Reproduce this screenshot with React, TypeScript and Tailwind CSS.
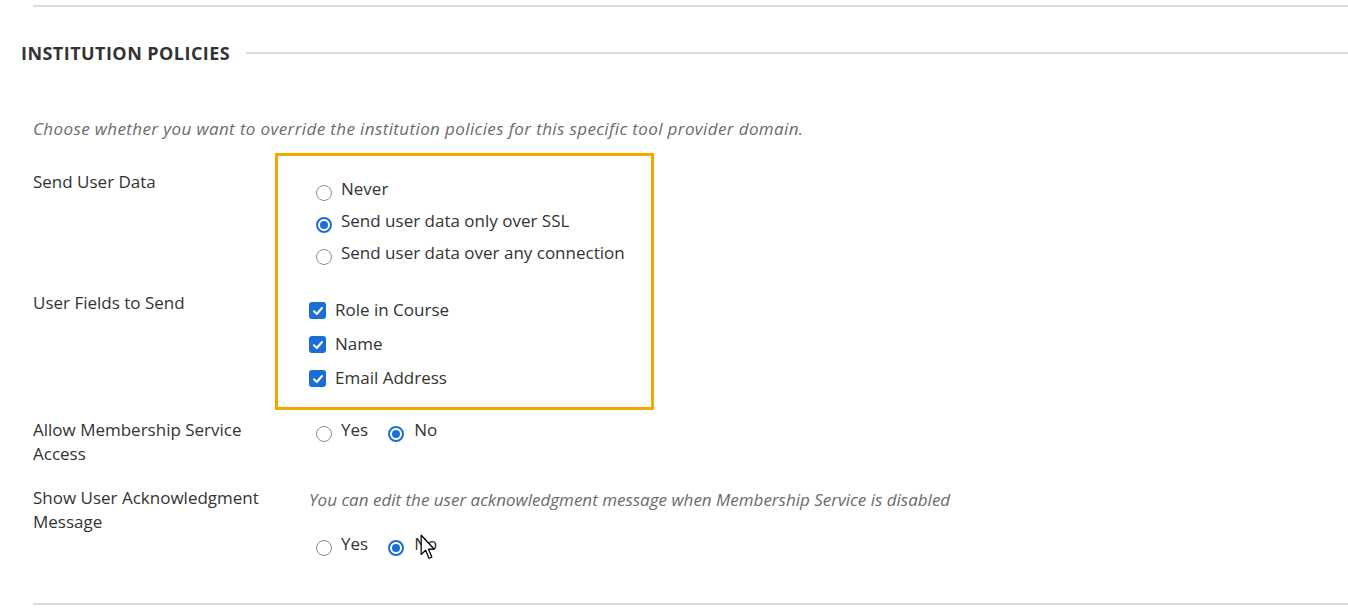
import React from 'react';

const Radio: React.FC<{ checked?: boolean }> = ({ checked }) => (
  <span
    className={
      'mt-[8px] flex h-[16px] w-[16px] shrink-0 items-center justify-center rounded-full bg-white ' +
      (checked ? 'border-2 border-[#1a6fd6]' : 'border-[1.5px] border-[#8c8c8c]')
    }
  >
    {checked && <span className="h-[8px] w-[8px] rounded-full bg-[#1a6fd6]" />}
  </span>
);

const Checkbox: React.FC = () => (
  <span className="mt-[4px] flex h-[17px] w-[17px] shrink-0 items-center justify-center rounded-[3px] bg-[#1a6fd6]">
    <svg width="12" height="12" viewBox="0 0 12 12" fill="none">
      <path d="M2 6.3 L4.8 9 L10 3" stroke="white" strokeWidth="2" strokeLinecap="round" strokeLinejoin="round" />
    </svg>
  </span>
);

const RadioOption: React.FC<{ label: string; checked?: boolean }> = ({ label, checked }) => (
  <div className="flex h-[24px] items-start gap-[9px]">
    <Radio checked={checked} />
    <span className="leading-[24px]">{label}</span>
  </div>
);

const YesNo: React.FC = () => (
  <div className="flex h-[24px] items-start pl-[7px]">
    <Radio />
    <span className="ml-[9px] leading-[24px]">Yes</span>
    <span className="ml-[20px] flex">
      <Radio checked />
    </span>
    <span className="ml-[10px] leading-[24px]">No</span>
  </div>
);

const Cursor: React.FC = () => (
  <svg className="absolute left-[419px] top-[534px]" width="18" height="26" viewBox="0 0 13 21">
    <path
      d="M1 1 L1 16.5 L4.6 13.1 L7.3 19.6 L9.6 18.6 L6.9 12.3 L11.6 12.3 Z"
      fill="white"
      stroke="black"
      strokeWidth="1"
      strokeLinejoin="round"
    />
  </svg>
);

export default function App() {
  return (
    <div
      className="relative h-[610px] w-[1348px] overflow-hidden bg-white text-[17px] text-[#333]"
      style={{ fontFamily: '"Open Sans", "Liberation Sans", sans-serif' }}
    >
      <div className="ml-[33px] mt-[5px] h-[2px] bg-[#dcdcdc]" />

      <div className="mt-[35px] flex items-center pl-[21px]">
        <h2 className="text-[18px] font-bold leading-[22px] tracking-[0.45px] text-[#333]">INSTITUTION POLICIES</h2>
        <div className="ml-[16px] h-[2px] flex-1 bg-[#dcdcdc]" />
      </div>

      <div className="pl-[33px]">
        <p className="mt-[55px] text-[17px] italic leading-[20px] tracking-[0.38px] text-[#6b6b6b]">
          Choose whether you want to override the institution policies for this specific tool provider domain.
        </p>

        <div className="mt-[31px] grid grid-cols-[276px_1fr]">
          <div className="leading-[24px]">Send User Data</div>
          <div className="flex flex-col gap-[8px] pl-[7px] pt-[7px]">
            <RadioOption label="Never" />
            <RadioOption label="Send user data only over SSL" checked />
            <RadioOption label="Send user data over any connection" />
          </div>
        </div>

        <div className="mt-[26px] grid grid-cols-[276px_1fr]">
          <div className="leading-[24px]">User Fields to Send</div>
          <div className="flex flex-col gap-[10px] pt-[7px]">
            {['Role in Course', 'Name', 'Email Address'].map((f) => (
              <div key={f} className="flex h-[24px] items-start gap-[9px]">
                <Checkbox />
                <span className="leading-[24px]">{f}</span>
              </div>
            ))}
          </div>
        </div>

        <div className="mt-[28px] grid grid-cols-[276px_1fr]">
          <div className="w-[230px] leading-[24px]">Allow Membership Service Access</div>
          <YesNo />
        </div>

        <div className="mt-[20px] grid grid-cols-[276px_1fr]">
          <div className="w-[250px] leading-[24px]">Show User Acknowledgment Message</div>
          <div className="pt-[4px]">
            <p className="text-[17px] italic leading-[20px] text-[#6b6b6b]">
              You can edit the user acknowledgment message when Membership Service is disabled
            </p>
            <div className="mt-[22px]">
              <YesNo />
            </div>
          </div>
        </div>

        <div className="mt-[47px] h-[2px] bg-[#dcdcdc]" />
      </div>

      <div className="pointer-events-none absolute left-[275px] top-[153px] h-[257px] w-[379px] border-[3px] border-[#f5a700]" />
      <Cursor />
    </div>
  );
}
